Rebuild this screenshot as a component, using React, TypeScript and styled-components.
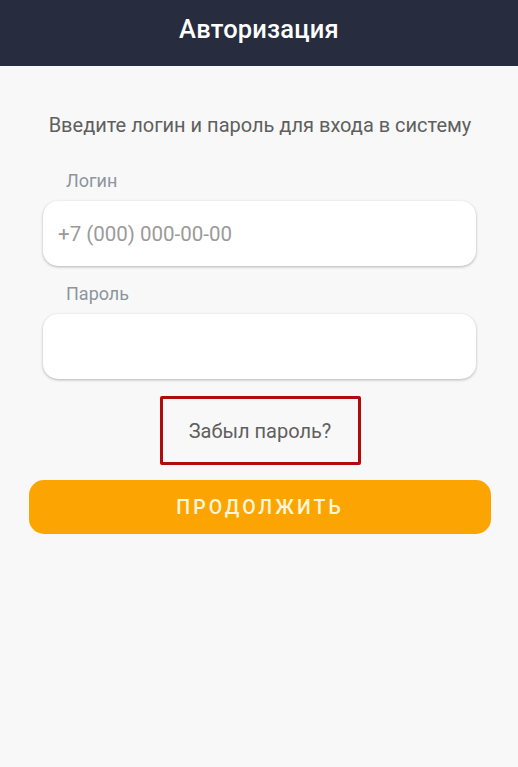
import styled, { createGlobalStyle } from "styled-components"

const GlobalStyle = createGlobalStyle`
    html, body {
        margin: 0;
        padding: 0;
        background: #f8f8f8;
        font-family: Roboto, "Liberation Sans", sans-serif;
    }
`

export const Page = styled.div`
    width: 518px;
    min-height: 767px;
    background: #f8f8f8;
`

export const Header = styled.header`
    height: 66px;
    background: #272d3f;
    display: flex;
    align-items: center;
    justify-content: center;
`

export const Title = styled.h1`
    margin: 0 0 8px;
    color: #fff;
    font-size: 25.5px;
    font-weight: 500;
    letter-spacing: 0.2px;
`

export const Form = styled.form`
    display: flex;
    flex-direction: column;
    padding: 47px 27px 0 29px;
`

export const Hint = styled.p`
    margin: 0;
    text-align: center;
    color: #5f5f5f;
    font-size: 20px;
    line-height: 24px;
`

export const Field = styled.div`
    display: flex;
    flex-direction: column;
    padding: 0 15px 0 14px;
    margin-top: ${(p: { first?: boolean }) => (p.first ? "33px" : "17px")};
`

export const Label = styled.label`
    padding-left: 23px;
    color: #8c959e;
    font-size: 18px;
    line-height: 22px;
    margin-bottom: 9px;
`

export const Input = styled.input`
    box-sizing: border-box;
    width: 100%;
    height: 65px;
    border: none;
    border-radius: 15px;
    background: #fff;
    box-shadow: 0 1px 3px rgba(0, 0, 0, 0.28);
    padding: 0 15px;
    font-family: inherit;
    font-size: 20.5px;
    color: #333;
    outline: none;

    &::placeholder {
        color: #9a9a9a;
    }
`

export const ForgotRow = styled.div`
    display: flex;
    justify-content: center;
    margin-top: 17px;
`

export const ForgotLink = styled.a`
    box-sizing: border-box;
    width: 201px;
    height: 69px;
    display: flex;
    align-items: center;
    justify-content: center;
    border: 3px solid #b10a0a;
    border-radius: 2px;
    color: #5f5f5f;
    font-size: 20px;
    text-decoration: none;
`

export const SubmitButton = styled.button`
    margin-top: 15px;
    height: 54px;
    border: none;
    border-radius: 15px;
    background: #fca502;
    color: #fff6dc;
    font-family: inherit;
    font-size: 19.5px;
    font-weight: 500;
    letter-spacing: 3px;
`

export default function App() {
    return (
        <>
            <GlobalStyle />
            <Page>
                <Header>
                    <Title>Авторизация</Title>
                </Header>
                <Form onSubmit={(e) => e.preventDefault()}>
                    <Hint>Введите логин и пароль для входа в систему</Hint>
                    <Field first>
                        <Label>Логин</Label>
                        <Input type="tel" placeholder="+7 (000) 000-00-00" />
                    </Field>
                    <Field>
                        <Label>Пароль</Label>
                        <Input type="password" />
                    </Field>
                    <ForgotRow>
                        <ForgotLink href="#">Забыл пароль?</ForgotLink>
                    </ForgotRow>
                    <SubmitButton type="submit">ПРОДОЛЖИТЬ</SubmitButton>
                </Form>
            </Page>
        </>
    )
}
